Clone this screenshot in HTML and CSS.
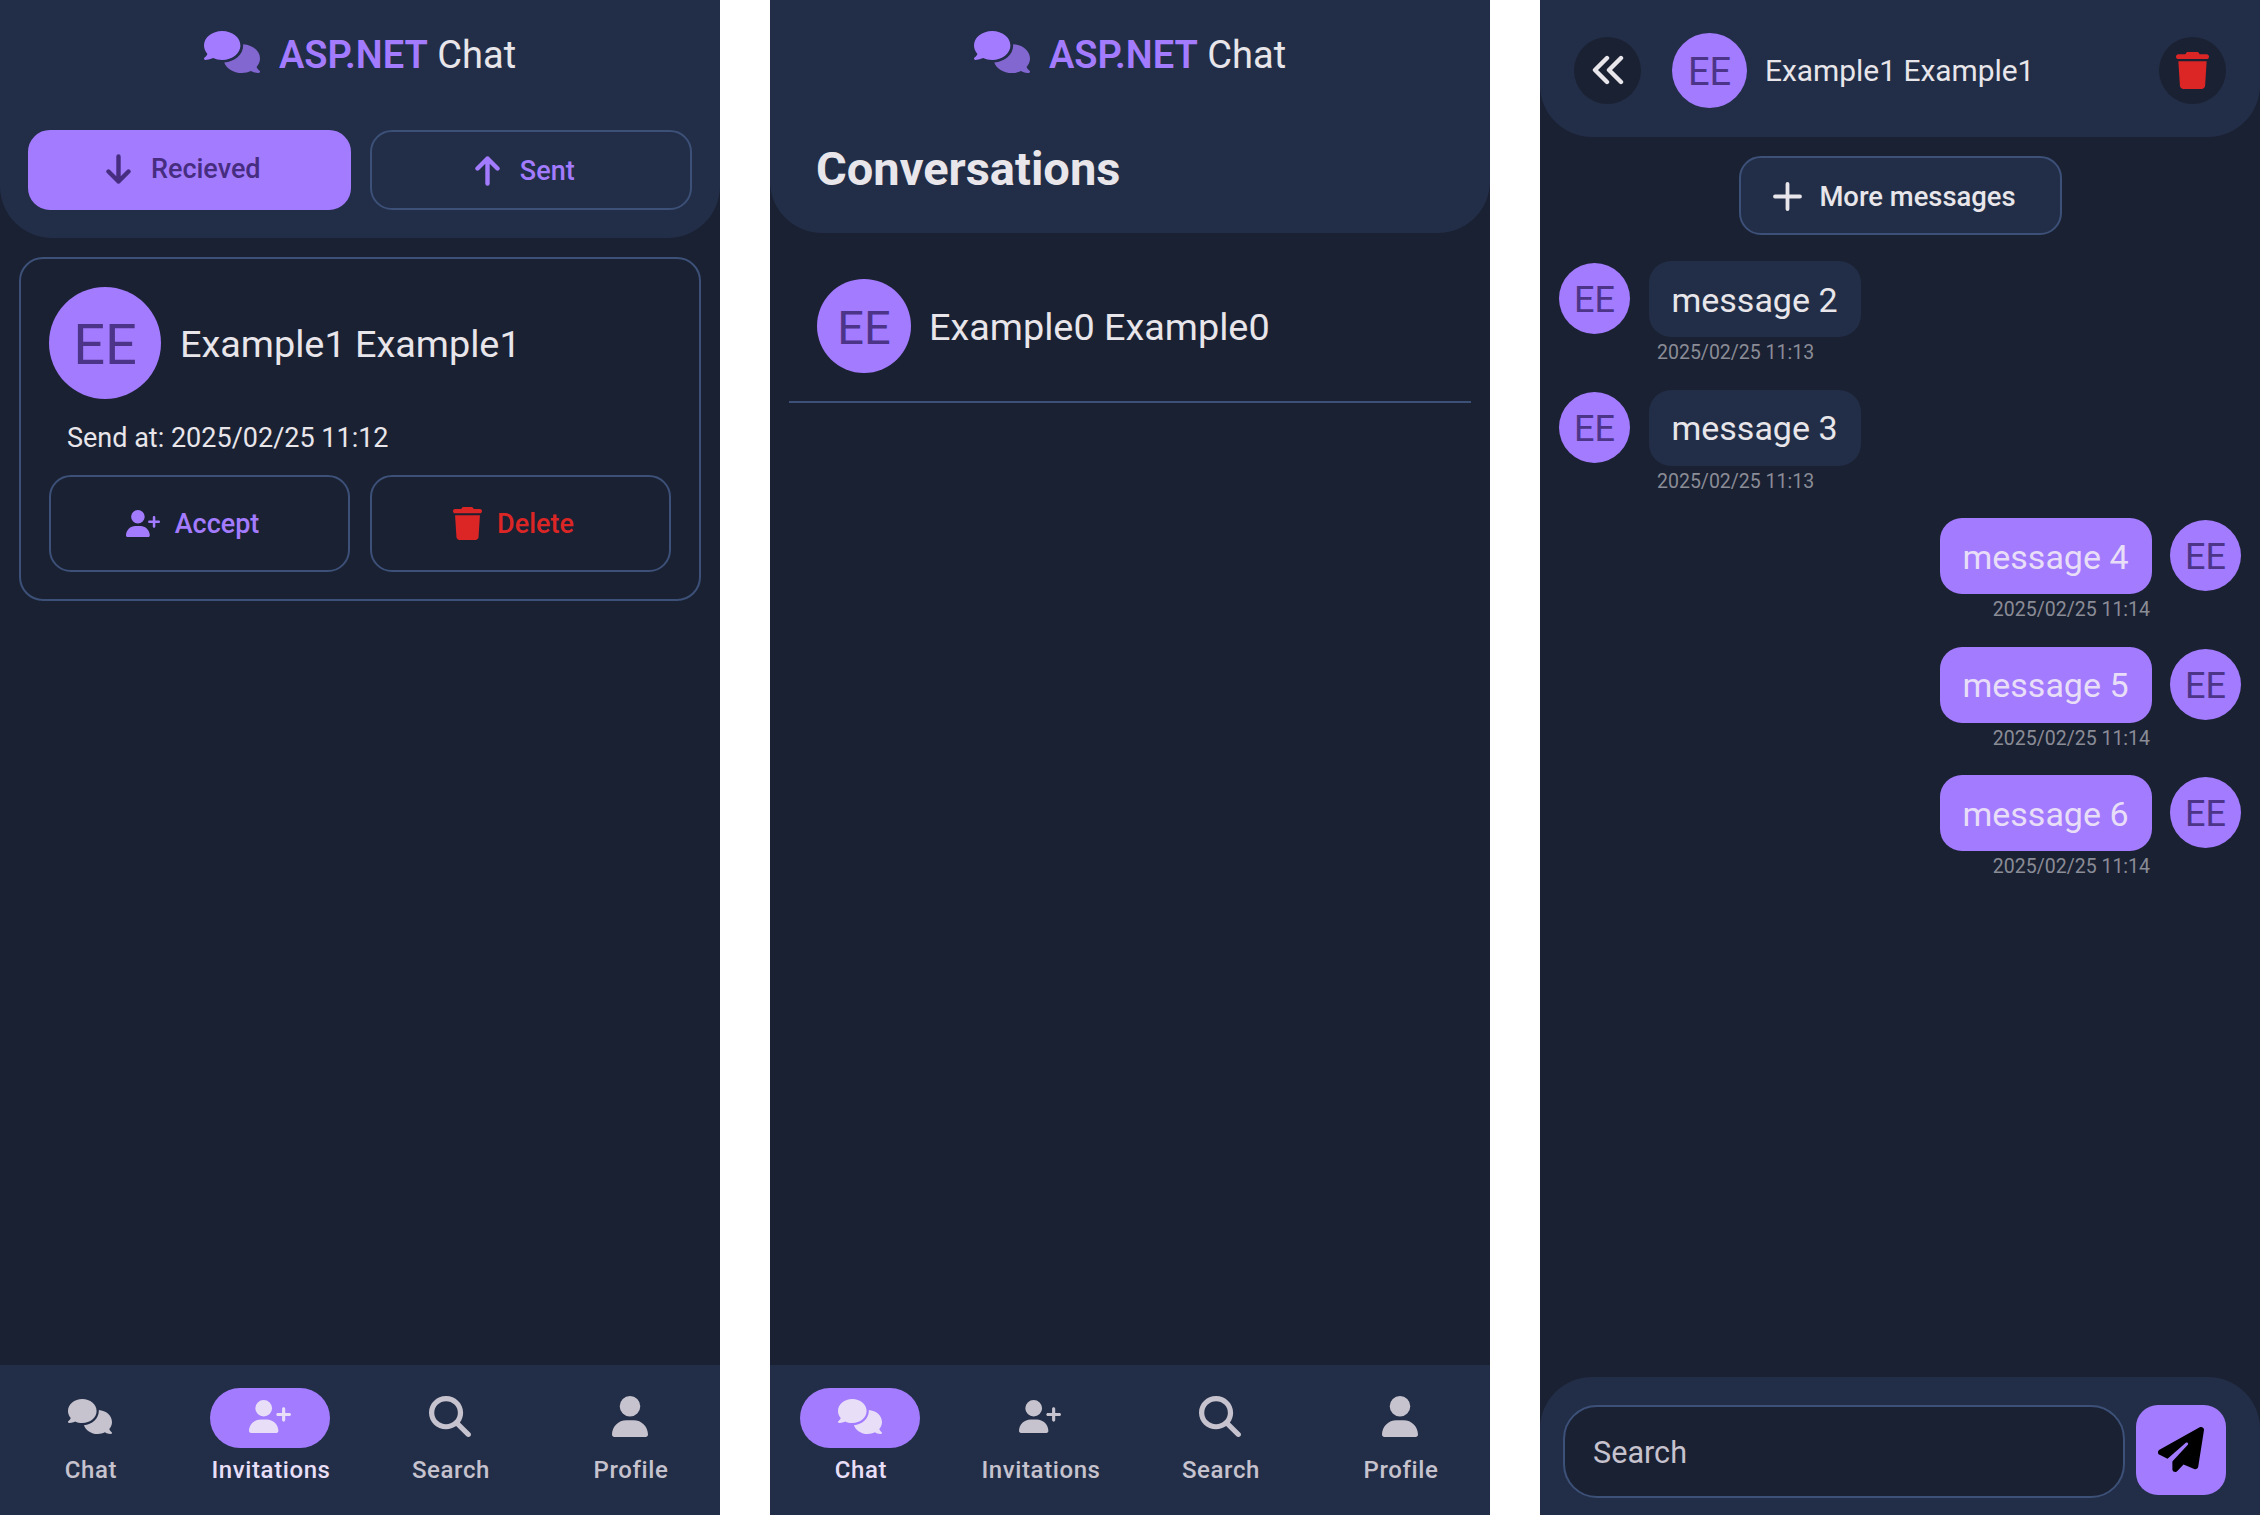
FILE: index.html
```html
<!DOCTYPE html>
<html lang="en">

<head>
    <meta charset="UTF-8">
    <meta name="viewport" content="width=device-width, initial-scale=1.0">
    <title>ASP.NET Chat</title>
    <link rel="stylesheet" href="styles.css">
</head>

<body>
    <svg class="defs" aria-hidden="true">
        <symbol id="i-comments" viewBox="0 0 640 512" preserveAspectRatio="none">
            <path d="M208 352c114.9 0 208-78.8 208-176S322.9 0 208 0S0 78.8 0 176c0 38.6 14.7 74.3 39.6 103.4c-3.5 9.4-8.7 17.7-14.2 24.7c-4.8 6.2-9.7 11-13.3 14.3c-1.8 1.6-3.3 2.9-4.3 3.7c-.5 .4-.9 .7-1.1 .8l-.2 .2 0 0 0 0C1 327.2-1.4 334.4 .8 340.9S9.1 352 16 352c21.8 0 43.8-5.6 62.1-12.5c9.2-3.5 17.8-7.4 25.3-11.4C134.1 343.3 169.8 352 208 352z"/>
            <path class="second" d="M448 176c0 112.3-99.1 196.9-216.5 207C255.8 457.4 336.4 512 432 512c38.2 0 73.9-8.7 104.7-23.9c7.5 4 16 7.9 25.2 11.4c18.3 6.9 40.3 12.5 62.1 12.5c6.9 0 13.1-4.5 15.2-11.1c2.1-6.6-.2-13.8-5.8-17.9l0 0 0 0-.2-.2c-.2-.2-.6-.4-1.1-.8c-1-.8-2.5-2-4.3-3.7c-3.6-3.3-8.5-8.1-13.3-14.3c-5.5-7-10.7-15.4-14.2-24.7c24.9-29 39.6-64.7 39.6-103.4c0-92.8-84.9-168.9-192.6-175.5c.4 5.1 .6 10.3 .6 15.5z"/>
        </symbol>
        <symbol id="i-user-plus" viewBox="0 0 640 512" preserveAspectRatio="none">
            <path d="M96 128a128 128 0 1 1 256 0A128 128 0 1 1 96 128zM0 482.3C0 383.8 79.8 304 178.3 304h91.4C368.2 304 448 383.8 448 482.3c0 16.4-13.3 29.7-29.7 29.7H29.7C13.3 512 0 498.7 0 482.3zM504 312V248H440c-13.3 0-24-10.7-24-24s10.7-24 24-24h64V136c0-13.3 10.7-24 24-24s24 10.7 24 24v64h64c13.3 0 24 10.7 24 24s-10.7 24-24 24H552v64c0 13.3-10.7 24-24 24s-24-10.7-24-24z"/>
        </symbol>
        <symbol id="i-search" viewBox="0 0 512 512" preserveAspectRatio="none">
            <path d="M416 208c0 45.9-14.9 88.3-40 122.7L502.6 457.4c12.5 12.5 12.5 32.8 0 45.3s-32.8 12.5-45.3 0L330.7 376c-34.4 25.2-76.8 40-122.7 40C93.1 416 0 322.9 0 208S93.1 0 208 0S416 93.1 416 208zM208 352a144 144 0 1 0 0-288 144 144 0 1 0 0 288z"/>
        </symbol>
        <symbol id="i-user" viewBox="0 0 448 512" preserveAspectRatio="none">
            <path d="M224 256A128 128 0 1 0 224 0a128 128 0 1 0 0 256zm-45.7 48C79.8 304 0 383.8 0 482.3C0 498.7 13.3 512 29.7 512H418.3c16.4 0 29.7-13.3 29.7-29.7C448 383.8 368.2 304 269.7 304H178.3z"/>
        </symbol>
        <symbol id="i-trash" viewBox="0 0 448 512" preserveAspectRatio="none">
            <path d="M135.2 17.7L128 32H32C14.3 32 0 46.3 0 64S14.3 96 32 96H416c17.7 0 32-14.3 32-32s-14.3-32-32-32H320l-7.2-14.3C307.4 6.8 296.3 0 284.2 0H163.8c-12.1 0-23.2 6.8-28.6 17.7zM416 128H32L53.2 467c1.6 25.3 22.6 45 47.9 45H346.9c25.3 0 46.3-19.7 47.9-45L416 128z"/>
        </symbol>
        <symbol id="i-plane" viewBox="0 0 512 512" preserveAspectRatio="none">
            <path d="M498.1 5.6c10.1 7 15.4 19.1 13.5 31.2l-64 416c-1.5 9.7-7.4 18.2-16 23s-18.9 5.4-28 1.6L284 427.7l-68.5 74.1c-8.9 9.7-22.9 12.9-35.2 8.1S160 493.2 160 480V396.4c0-4 1.5-7.8 4.2-10.7L331.8 202.8c5.8-6.3 5.6-16-.4-22s-15.7-6.4-22-.7L106 360.8 17.7 316.6C7.1 311.3 .3 300.7 0 288.9s5.9-22.8 16.1-28.7l448-256c10.7-6.1 23.9-5.5 34 1.4z"/>
        </symbol>
        <symbol id="i-down" viewBox="0 0 25 30">
            <path d="M12.5 2.5V27.5M2.5 17.5L12.5 27.5L22.5 17.5" fill="none" stroke="currentColor" stroke-width="4.4" stroke-linecap="round" stroke-linejoin="round"/>
        </symbol>
        <symbol id="i-up" viewBox="0 0 25 30">
            <path d="M12.5 27.5V2.5M2.5 12.5L12.5 2.5L22.5 12.5" fill="none" stroke="currentColor" stroke-width="4.4" stroke-linecap="round" stroke-linejoin="round"/>
        </symbol>
        <symbol id="i-plus" viewBox="0 0 29 29">
            <path d="M14.5 2V27M2 14.5H27" fill="none" stroke="currentColor" stroke-width="3.8" stroke-linecap="round"/>
        </symbol>
        <symbol id="i-back" viewBox="0 0 32 30">
            <path d="M15 3L3 15L15 27M29 3L17 15L29 27" fill="none" stroke="currentColor" stroke-width="4.4" stroke-linecap="round" stroke-linejoin="round"/>
        </symbol>
    </svg>

    <!-- invitations -->
    <section class="screen">
        <header class="top top-invites">
            <div class="brand">
                <svg class="brand-icon"><use href="#i-comments"/></svg>
                <span class="brand-name"><b>ASP.NET</b> Chat</span>
            </div>
            <div class="tabs">
                <button class="btn tab tab-active" type="button"><svg class="ic-arrow"><use href="#i-down"/></svg>Recieved</button>
                <button class="btn tab tab-sent" type="button"><svg class="ic-arrow"><use href="#i-up"/></svg>Sent</button>
            </div>
        </header>
        <main class="content">
            <div class="invite">
                <div class="person">
                    <div class="avatar avatar-lg">EE</div>
                    <span class="person-name">Example1 Example1</span>
                </div>
                <p class="invite-date">Send at: 2025/02/25 11:12</p>
                <div class="invite-actions">
                    <button class="btn action action-accept" type="button"><svg class="ic-accept"><use href="#i-user-plus"/></svg>Accept</button>
                    <button class="btn action action-delete" type="button"><svg class="ic-delete"><use href="#i-trash"/></svg>Delete</button>
                </div>
            </div>
        </main>
        <nav class="tabbar">
            <a class="nav-item"><span class="nav-pill"><svg class="nav-chat"><use href="#i-comments"/></svg></span>Chat</a>
            <a class="nav-item nav-active"><span class="nav-pill"><svg class="nav-invite"><use href="#i-user-plus"/></svg></span>Invitations</a>
            <a class="nav-item"><span class="nav-pill"><svg class="nav-search"><use href="#i-search"/></svg></span>Search</a>
            <a class="nav-item"><span class="nav-pill"><svg class="nav-user"><use href="#i-user"/></svg></span>Profile</a>
        </nav>
    </section>

    <!-- conversations -->
    <section class="screen">
        <header class="top top-convs">
            <div class="brand">
                <svg class="brand-icon"><use href="#i-comments"/></svg>
                <span class="brand-name"><b>ASP.NET</b> Chat</span>
            </div>
            <h1 class="convs-title">Conversations</h1>
        </header>
        <main class="content">
            <div class="conv">
                <div class="avatar avatar-md">EE</div>
                <span class="person-name">Example0 Example0</span>
            </div>
        </main>
        <nav class="tabbar">
            <a class="nav-item nav-active"><span class="nav-pill"><svg class="nav-chat"><use href="#i-comments"/></svg></span>Chat</a>
            <a class="nav-item"><span class="nav-pill"><svg class="nav-invite"><use href="#i-user-plus"/></svg></span>Invitations</a>
            <a class="nav-item"><span class="nav-pill"><svg class="nav-search"><use href="#i-search"/></svg></span>Search</a>
            <a class="nav-item"><span class="nav-pill"><svg class="nav-user"><use href="#i-user"/></svg></span>Profile</a>
        </nav>
    </section>

    <!-- open chat -->
    <section class="screen">
        <header class="top top-chat">
            <button class="round-btn back-btn" type="button"><svg class="ic-back"><use href="#i-back"/></svg></button>
            <div class="avatar avatar-sm">EE</div>
            <span class="chat-name">Example1 Example1</span>
            <button class="round-btn trash-btn" type="button"><svg class="ic-trash"><use href="#i-trash"/></svg></button>
        </header>
        <main class="messages">
            <button class="btn more" type="button"><svg class="ic-plus"><use href="#i-plus"/></svg>More messages</button>
            <div class="msg">
                <div class="avatar avatar-xs">EE</div>
                <div class="msg-body">
                    <div class="bubble">message 2</div>
                    <div class="msg-time">2025/02/25 11:13</div>
                </div>
            </div>
            <div class="msg">
                <div class="avatar avatar-xs">EE</div>
                <div class="msg-body">
                    <div class="bubble">message 3</div>
                    <div class="msg-time">2025/02/25 11:13</div>
                </div>
            </div>
            <div class="msg msg-own">
                <div class="avatar avatar-xs">EE</div>
                <div class="msg-body">
                    <div class="bubble">message 4</div>
                    <div class="msg-time">2025/02/25 11:14</div>
                </div>
            </div>
            <div class="msg msg-own">
                <div class="avatar avatar-xs">EE</div>
                <div class="msg-body">
                    <div class="bubble">message 5</div>
                    <div class="msg-time">2025/02/25 11:14</div>
                </div>
            </div>
            <div class="msg msg-own">
                <div class="avatar avatar-xs">EE</div>
                <div class="msg-body">
                    <div class="bubble">message 6</div>
                    <div class="msg-time">2025/02/25 11:14</div>
                </div>
            </div>
        </main>
        <footer class="composer">
            <div class="composer-input">Search</div>
            <button class="send-btn" type="button"><svg class="ic-plane"><use href="#i-plane"/></svg></button>
        </footer>
    </section>
</body>

</html>
```

FILE: styles.css
```css
* {
    box-sizing: border-box;
}

body {
    margin: 0;
    height: 1515px;
    overflow: hidden;
    display: flex;
    gap: 50px;
    background-color: #fff;
    font-family: Roboto, "Liberation Sans", sans-serif;
    color: #e8e6ea;
}

.defs {
    position: absolute;
    width: 0;
    height: 0;
}

svg {
    display: block;
    flex: none;
    fill: currentColor;
}

button {
    font-family: inherit;
    cursor: pointer;
}

.screen {
    width: 720px;
    height: 1515px;
    display: flex;
    flex-direction: column;
    background-color: #1a2133;
}

.top {
    background-color: #222e47;
    border-radius: 0 0 52px 52px;
}

.top-invites {
    height: 238px;
    padding: 0 28px;
}

.top-convs {
    height: 233px;
}

.brand {
    display: flex;
    justify-content: center;
    align-items: center;
    gap: 19px;
    height: 104px;
}

.brand-icon {
    --second: 0.75;
    width: 56px;
    height: 42px;
    color: #a37bff;
}

.second {
    opacity: var(--second, 1);
}

.brand-name {
    padding-top: 5px;
    font-size: 38px;
    line-height: 44px;
}

.brand-name b {
    font-weight: 600;
    color: #a37bff;
}

.tabs {
    display: flex;
    gap: 19px;
    margin-top: 26px;
}

.btn {
    display: flex;
    justify-content: center;
    align-items: center;
    background: none;
    border: 2px solid #3c5078;
    border-radius: 22px;
    font-weight: 500;
}

.tab {
    flex: 1;
    height: 80px;
    gap: 20px;
    padding: 0 12px 0 0;
    font-size: 27px;
    color: #a37bff;
}

.tab-active {
    padding-bottom: 2px;
    background-color: #a37bff;
    border-color: #a37bff;
    color: #472d80;
}

.tab-sent {
    padding-top: 2px;
}

.ic-arrow {
    width: 25px;
    height: 30px;
}

.content {
    flex: 1;
}

.invite {
    margin: 19px 19px 0;
    height: 344px;
    padding: 28px;
    border: 2px solid #3c5078;
    border-radius: 24px;
}

.person {
    display: flex;
    align-items: center;
    gap: 19px;
}

.avatar {
    display: flex;
    justify-content: center;
    align-items: center;
    flex: none;
    padding-top: 3px;
    border-radius: 50%;
    background-color: #a37bff;
    color: #4c3588;
}

.avatar-lg {
    width: 112px;
    height: 112px;
    font-size: 56px;
}

.avatar-md {
    width: 94px;
    height: 94px;
    font-size: 47px;
}

.avatar-sm {
    width: 75px;
    height: 75px;
    font-size: 38px;
}

.avatar-xs {
    width: 71px;
    height: 71px;
    font-size: 36px;
}

.person-name {
    padding-top: 2px;
    font-size: 37.8px;
}

.invite-date {
    margin: 22px 0 0 18px;
    font-size: 27px;
    line-height: 34px;
}

.invite-actions {
    display: flex;
    gap: 20px;
    margin-top: 20px;
}

.action {
    flex: 1;
    height: 97px;
    gap: 15px;
    padding: 0 14px 0 0;
    font-size: 27px;
}

.action-accept {
    color: #a37bff;
}

.action-delete {
    color: #dc2626;
}

.ic-accept {
    width: 34px;
    height: 27px;
}

.ic-delete {
    width: 29px;
    height: 33px;
}

.tabbar {
    display: grid;
    grid-template-columns: repeat(4, 1fr);
    height: 150px;
    padding-top: 23px;
    background-color: #222e47;
}

.nav-item {
    display: flex;
    flex-direction: column;
    align-items: center;
    gap: 7px;
    padding-left: 2px;
    font-size: 24px;
    font-weight: 500;
    letter-spacing: 0.6px;
    line-height: 30px;
    color: #c6c2ce;
}

.nav-pill {
    display: flex;
    justify-content: center;
    align-items: center;
    width: 120px;
    height: 60px;
    margin-left: -2px;
    padding-bottom: 4px;
    border-radius: 30px;
}

.nav-active {
    color: #e8def8;
}

.nav-active .nav-pill {
    background-color: #a37bff;
}

.nav-chat {
    width: 44px;
    height: 35px;
}

.nav-invite {
    width: 42px;
    height: 33px;
}

.nav-search {
    width: 42px;
    height: 41px;
}

.nav-user {
    width: 36px;
    height: 41px;
}

.convs-title {
    margin: 38px 0 0 46px;
    font-size: 47px;
    font-weight: 700;
    line-height: 54px;
}

.conv {
    display: flex;
    align-items: center;
    gap: 18px;
    margin: 0 19px;
    height: 170px;
    padding: 17px 28px 0;
    border-bottom: 2px solid #3c5078;
}

.top-chat {
    display: flex;
    align-items: center;
    height: 137px;
    padding: 3px 34px 0;
}

.round-btn {
    display: flex;
    justify-content: center;
    align-items: center;
    flex: none;
    width: 67px;
    height: 67px;
    padding: 0;
    border: none;
    border-radius: 50%;
    background-color: #1a2133;
}

.back-btn {
    color: #e8e6ea;
    margin-right: 31px;
}

.trash-btn {
    margin-left: auto;
    color: #dc2626;
}

.ic-back {
    width: 32px;
    height: 30px;
}

.ic-trash {
    width: 33px;
    height: 37px;
}

.chat-name {
    margin-left: 18px;
    font-size: 29.9px;
}

.messages {
    flex: 1;
    display: flex;
    flex-direction: column;
    padding: 19px 19px 0;
}

.more {
    align-self: center;
    height: 79px;
    width: 323px;
    gap: 17px;
    margin-bottom: 26px;
    padding: 2px 11px 0 0;
    background-color: #222e47;
    font-size: 27.4px;
    color: #e8e6ea;
}

.ic-plus {
    width: 29px;
    height: 29px;
}

.msg {
    display: flex;
    gap: 19px;
    height: 128.5px;
    padding-top: 2px;
}

.msg .msg-body {
    margin-top: -2px;
}

.msg-own {
    flex-direction: row-reverse;
    gap: 18px;
}

.bubble {
    width: 212px;
    height: 76px;
    display: flex;
    justify-content: center;
    align-items: center;
    padding-top: 1px;
    padding-right: 1px;
    border-radius: 22px;
    background-color: #222e47;
    font-size: 34px;
}

.msg-own .bubble {
    background-color: #a37bff;
    color: #e8def8;
}

.msg-time {
    margin-top: 4px;
    padding-left: 8px;
    font-size: 19.5px;
    line-height: 24px;
    color: #8a8c96;
}

.msg-own .msg-time {
    padding: 0 2px 0 0;
    text-align: right;
}

.composer {
    display: flex;
    gap: 11px;
    height: 138px;
    padding: 28px 34px 0 23px;
    background-color: #222e47;
    border-radius: 52px 52px 0 0;
}

.composer-input {
    flex: 1;
    height: 93px;
    padding: 1px 28px 0;
    display: flex;
    align-items: center;
    background-color: #1a2133;
    border: 2px solid #3c5078;
    border-radius: 34px;
    font-size: 30.6px;
    color: #c6c2ce;
}

.send-btn {
    display: flex;
    justify-content: center;
    align-items: center;
    width: 90px;
    height: 90px;
    padding: 0 0 2px;
    border: none;
    border-radius: 22px;
    background-color: #a37bff;
}

.ic-plane {
    width: 46px;
    height: 45px;
    color: #000;
}
```
